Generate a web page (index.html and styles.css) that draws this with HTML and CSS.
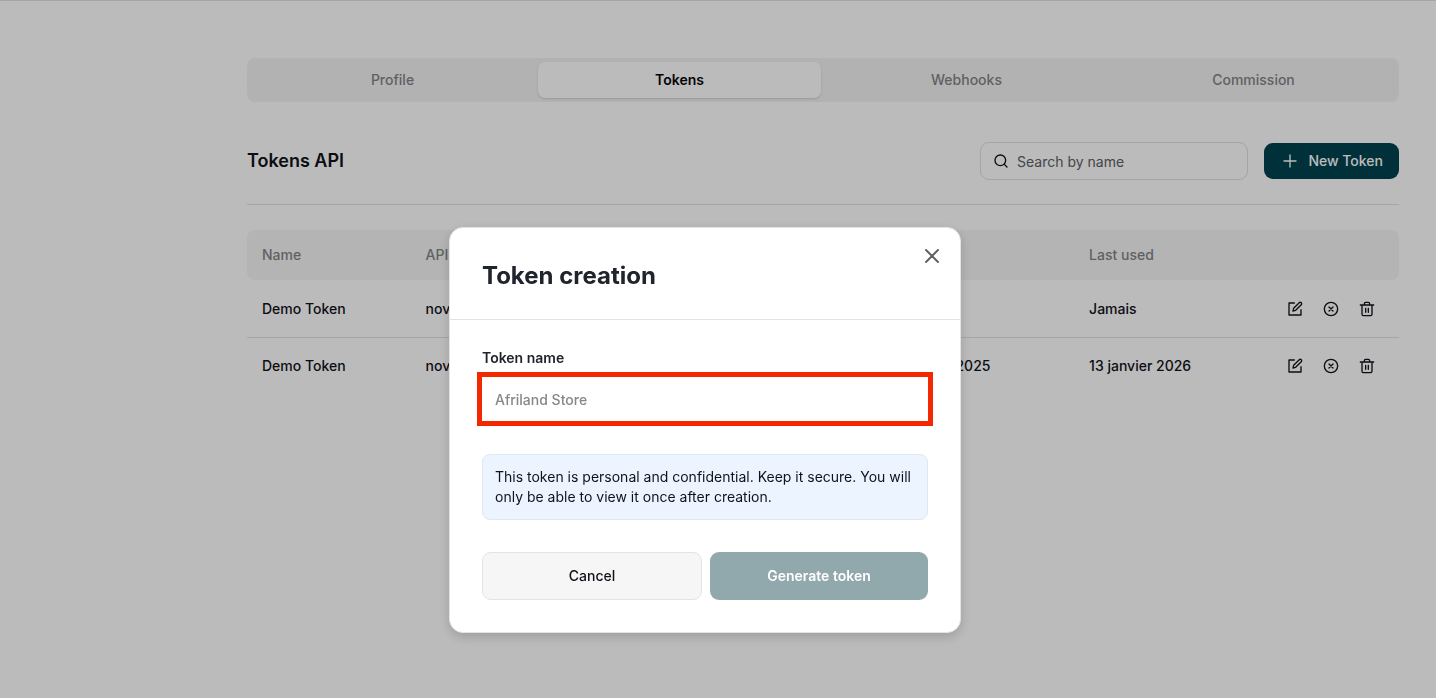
FILE: index.html
```html
<!DOCTYPE html>
<html lang="en">
<head>
<meta charset="utf-8">
<meta name="viewport" content="width=device-width, initial-scale=1">
<title>Tokens API</title>
<link rel="stylesheet" href="styles.css">
</head>
<body>
<svg class="sprite" aria-hidden="true">
  <symbol id="edit" viewBox="0 0 24 24"><path d="M11 3H3v18h18v-8"/><path d="M18.4 2.6a2.1 2.1 0 0 1 3 3L13 14l-4.2 1.2L10 11z"/></symbol>
  <symbol id="revoke" viewBox="0 0 24 24"><circle cx="12" cy="12" r="10"/><path d="m15 9-6 6M9 9l6 6"/></symbol>
  <symbol id="trash" viewBox="0 0 24 24"><path d="M2 6h20M4.500 6v14a2 2 0 0 0 2 2h11a2 2 0 0 0 2-2V6M8 6V4a2 2 0 0 1 2-2h4a2 2 0 0 1 2 2v2M10 11v6M14 11v6"/></symbol>
</svg>
<main class="page">
  <nav class="tabs">
    <button class="tab" type="button">Profile</button>
    <button class="tab tab-active" type="button">Tokens</button>
    <button class="tab" type="button">Webhooks</button>
    <button class="tab" type="button">Commission</button>
  </nav>
  <header class="toolbar">
    <h1 class="title">Tokens API</h1>
    <label class="search">
      <svg class="icon" viewBox="0 0 24 24" aria-hidden="true"><circle cx="11" cy="11" r="8"/><path d="m21 21-4.300-4.300"/></svg>
      <input class="search-input" type="text" placeholder="Search by name" aria-label="Search by name">
    </label>
    <button class="new-token" type="button">
      <svg class="icon" viewBox="0 0 24 24" aria-hidden="true"><path d="M3 12h18M12 3v18"/></svg>
      New Token
    </button>
  </header>
  <table class="tokens">
    <colgroup><col class="col-name"><col class="col-key"><col class="col-date"><col class="col-used"><col class="col-actions"></colgroup>
    <thead>
      <tr><th>Name</th><th>API</th><th></th><th>Last used</th><th></th></tr>
    </thead>
    <tbody>
      <tr>
        <td>Demo Token</td><td>nov</td><td></td><td>Jamais</td>
        <td><div class="actions">
          <button class="action" type="button" aria-label="Edit"><svg class="icon"><use href="#edit"/></svg></button>
          <button class="action" type="button" aria-label="Revoke"><svg class="icon"><use href="#revoke"/></svg></button>
          <button class="action" type="button" aria-label="Delete"><svg class="icon"><use href="#trash"/></svg></button>
        </div></td>
      </tr>
      <tr>
        <td>Demo Token</td><td>nov</td><td>2025</td><td>13 janvier 2026</td>
        <td><div class="actions">
          <button class="action" type="button" aria-label="Edit"><svg class="icon"><use href="#edit"/></svg></button>
          <button class="action" type="button" aria-label="Revoke"><svg class="icon"><use href="#revoke"/></svg></button>
          <button class="action" type="button" aria-label="Delete"><svg class="icon"><use href="#trash"/></svg></button>
        </div></td>
      </tr>
    </tbody>
  </table>
</main>
<div class="overlay">
  <form class="modal" role="dialog" aria-labelledby="modal-title">
    <header class="modal-header">
      <h2 class="modal-title" id="modal-title">Token creation</h2>
      <button class="close" type="button" aria-label="Close"><svg class="close-icon" viewBox="0 0 16 16"><path d="M2 2l12 12M14 2 2 14"/></svg></button>
    </header>
    <div class="modal-body">
      <label class="label" for="token-name">Token name</label>
      <input class="name-input" id="token-name" type="text" placeholder="Afriland Store">
      <p class="notice">This token is personal and confidential. Keep it secure. You will only be able to view it once after creation.</p>
      <div class="buttons">
        <button class="button cancel" type="button">Cancel</button>
        <button class="button generate" type="submit">Generate token</button>
      </div>
    </div>
  </form>
</div>
</body>
</html>
```
FILE: styles.css
```css
* { box-sizing: border-box; }
body {
  margin: 0;
  font: 500 14px/20px Inter, "Liberation Sans", sans-serif;
  color: #10131a;
  background: #fff;
}
button, input { font: inherit; color: inherit; }
button { border: 0; padding: 0; background: none; }
.sprite { display: none; }
.icon {
  width: 16px;
  height: 16px;
  flex: none;
  fill: none;
  stroke: currentColor;
  stroke-width: 2;
  stroke-linejoin: round;
  stroke-linecap: round;
}
.page {
  border-top: 1px solid #e1e1e1;
  padding: 57px 37px 0 247px;
}
.tabs {
  display: grid;
  grid-template-columns: repeat(4, 1fr);
  gap: 4px;
  padding: 4px;
  border-radius: 8px;
  background: #f3f3f3;
}
.tab { height: 36px; border-radius: 7px; color: #848486; }
.tab-active {
  background: #fff;
  color: #06080e;
  font-weight: 600;
  box-shadow: 0 1px 2px rgba(0, 0, 0, 0.15);
}
.toolbar {
  display: flex;
  align-items: center;
  margin-top: 40px;
  padding-bottom: 24px;
  border-bottom: 1px solid #e1e1e1;
}
.title { margin: 0 auto 0 0; font-size: 18px; line-height: 24px; font-weight: 600; }
.search {
  display: flex;
  align-items: center;
  gap: 8px;
  width: 268px;
  height: 38px;
  padding: 0 12px;
  border: 1px solid #e1e1e1;
  border-radius: 9px;
}
.search-input { flex: 1; min-width: 0; border: 0; padding: 2px 0 0; outline: 0; background: none; font-weight: 400; }
.search-input::placeholder { color: #5c6067; opacity: 1; }
.new-token {
  display: flex;
  align-items: center;
  justify-content: flex-end;
  gap: 10px;
  width: 135px;
  height: 36px;
  margin-left: 16px;
  padding-right: 16px;
  border-radius: 9px;
  background: #004350;
  color: #fff;
}
.tokens {
  width: 100%;
  margin-top: 25px;
  table-layout: fixed;
  border-collapse: separate;
  border-spacing: 0;
}
.col-name { width: 14.200%; }
.col-key { width: 46%; }
.col-date { width: 11.600%; }
.col-used { width: 17%; }
.tokens th { height: 50px; padding: 0 15px; text-align: left; font-weight: 500; color: #848486; background: #f6f6f6; }
.tokens th:first-child { border-radius: 8px 0 0 8px; }
.tokens th:last-child { border-radius: 0 8px 8px 0; }
.tokens td { height: 56px; padding: 0 15px; }
.tokens tr:first-child td { height: 58px; border-bottom: 1px solid #e1e1e1; }
.actions { display: flex; justify-content: flex-end; gap: 20px; padding-right: 9px; }
.action { display: flex; }
.overlay {
  position: fixed;
  inset: 0;
  display: flex;
  justify-content: center;
  align-items: flex-start;
  padding: 227px 26px 0 0;
  background: rgba(0, 0, 0, 0.267);
}
.modal {
  width: 512px;
  border: 1px solid #e4e4e4;
  border-radius: 14px;
  background: #fff;
  box-shadow: 0 4px 12px rgba(0, 0, 0, 0.16);
}
.modal-header {
  display: flex;
  align-items: flex-start;
  justify-content: space-between;
  padding: 20px 20px 27px 32px;
  border-bottom: 1px solid #e1e3e6;
}
.modal-title { margin: 12px 0 0; font-size: 24px; line-height: 32px; font-weight: 700; color: #20242c; }
.close { display: flex; color: #5f6265; }
.close-icon { width: 16px; height: 16px; fill: none; stroke: currentColor; stroke-width: 2; stroke-linecap: round; }
.modal-body { padding: 28px 32px 32px; }
.label { display: block; font-weight: 600; color: #20242c; }
.name-input {
  display: block;
  width: 100%;
  height: 44px;
  margin-top: 9px;
  padding: 0 13px;
  border: 0;
  outline: 5px solid #f42800;
  background: #fff;
}
.name-input::placeholder { color: #84878c; opacity: 1; }
.notice {
  margin: 33px 0 0;
  padding: 12px;
  border: 1px solid #dfe7ef;
  border-radius: 8px;
  background: #ebf4ff;
  font-weight: 400;
}
.buttons { display: flex; gap: 8px; margin-top: 32px; }
.button { height: 48px; flex: 1; border-radius: 9px; }
.cancel { border: 1px solid #e2e4e7; background: #f6f6f6; }
.generate { background: #91a8ac; color: #fff; font-weight: 600; }
```
